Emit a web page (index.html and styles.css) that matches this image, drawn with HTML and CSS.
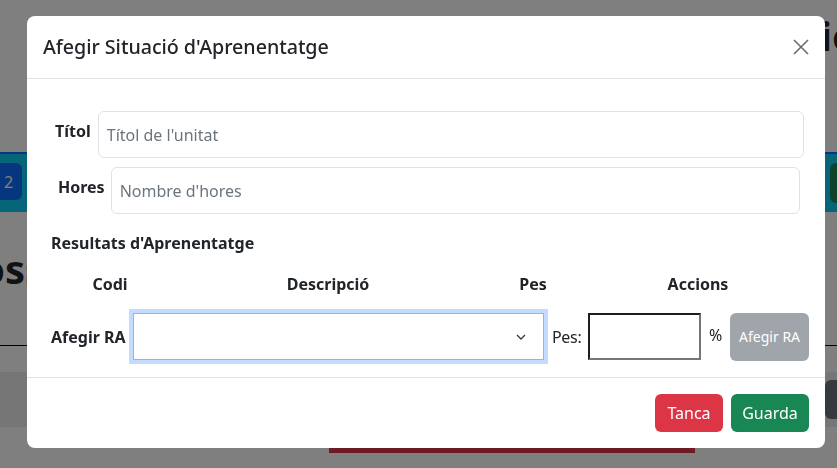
FILE: index.html
```html
<!DOCTYPE html>
<html lang="ca">
<head>
<meta charset="utf-8">
<title>Afegir Situació d'Aprenentatge</title>
<link rel="stylesheet" href="styles.css">
</head>
<body>
<div class="page">
  <header class="page-top"><h1 class="page-title">Programació</h1></header>
  <div class="toolbar">
    <span class="tb-btn tb-primary">2</span>
    <span class="tb-btn tb-success"></span>
  </div>
  <h2 class="section-title">ossos</h2>
  <hr class="rule">
  <div class="band"><span class="band-btn"></span></div>
  <div class="danger-bar"></div>
</div>
<div class="backdrop"></div>
<div class="modal" role="dialog">
  <div class="modal-header">
    <h5 class="modal-title">Afegir Situació d'Aprenentatge</h5>
    <button class="btn-close" aria-label="Close">
      <svg width="16" height="16" viewBox="0 0 16 16"><path d="M1 1L15 15M15 1L1 15" stroke="#6c6c6c" stroke-width="1.6" fill="none"/></svg>
    </button>
  </div>
  <div class="modal-body">
    <div class="form-row row-titol">
      <label class="form-label">Títol</label>
      <input class="form-input" type="text" placeholder="Títol de l'unitat">
    </div>
    <div class="form-row row-hores">
      <label class="form-label">Hores</label>
      <input class="form-input" type="text" placeholder="Nombre d'hores">
    </div>
    <h6 class="ra-title">Resultats d'Aprenentatge</h6>
    <div class="ra-head">
      <span>Codi</span><span>Descripció</span><span>Pes</span><span>Accions</span>
    </div>
    <div class="ra-add">
      <label class="ra-label">Afegir RA</label>
      <div class="ra-select">
        <svg width="10" height="6" viewBox="0 0 10 6"><polyline points="1,1 5,5 9,1" fill="none" stroke="#343a40" stroke-width="1.3"/></svg>
      </div>
      <span class="pes-label">Pes:</span>
      <input class="pes-input" type="text">
      <span class="pct">%</span>
      <button class="btn-add" disabled>Afegir RA</button>
    </div>
  </div>
  <div class="modal-footer">
    <button class="btn btn-danger">Tanca</button>
    <button class="btn btn-success">Guarda</button>
  </div>
</div>
</body>
</html>
```
FILE: styles.css
```css
html, body {
  margin: 0;
  padding: 0;
}
body {
  width: 837px;
  height: 468px;
  overflow: hidden;
  position: relative;
  background: #fff;
  font-family: "Noto Sans", "DejaVu Sans", sans-serif;
  color: #212529;
}

/* underlying page */
.page-top {
  height: 152px;
  display: flex;
  justify-content: flex-end;
  align-items: flex-start;
  overflow: hidden;
}
.page-title {
  margin: 12px -20px 0 0;
  font-size: 40px;
  line-height: 48px;
  font-weight: 700;
  white-space: nowrap;
}
.toolbar {
  height: 58px;
  border-top: 2px solid #0d6efd;
  background: #0dcaf0;
  display: flex;
  justify-content: space-between;
  align-items: center;
}
.tb-btn {
  display: flex;
  align-items: center;
  color: #fff;
  font-size: 16px;
}
.tb-primary {
  width: 18px;
  height: 37px;
  padding-left: 4px;
  background: #0d6efd;
  border-radius: 0 6px 6px 0;
  margin-top: -3px;
}
.tb-success {
  width: 30px;
  height: 40px;
  background: #198754;
  border-radius: 6px 0 0 6px;
  margin-right: -23px;
}
.section-title {
  margin: 33px 0 0 -20px;
  font-size: 40px;
  line-height: 48px;
  font-weight: 700;
  height: 100px;
  white-space: nowrap;
}
.rule {
  margin: 0;
  border: 0;
  border-top: 1px solid #000;
  height: 0;
}
.band {
  margin-top: 26px;
  height: 55px;
  background: #ececec;
  display: flex;
  justify-content: flex-end;
  align-items: center;
}
.band-btn {
  width: 40px;
  height: 39px;
  background: #6c757d;
  border-radius: 6px;
  margin-right: -28px;
}
.danger-bar {
  margin: 14px 0 0 329px;
  width: 366px;
  height: 12px;
  background: #dc3545;
}

/* overlay */
.backdrop {
  position: fixed;
  inset: 0;
  background: rgba(0, 0, 0, 0.5);
}
.modal {
  position: absolute;
  left: 27px;
  top: 16px;
  width: 798px;
  background: #fff;
  border-radius: 8px;
  overflow: hidden;
}
.modal-header {
  height: 62px;
  padding: 0 16px;
  border-bottom: 1px solid #dee2e6;
  display: flex;
  align-items: center;
  justify-content: space-between;
}
.modal-title {
  margin: 0;
  font-size: 19.7px;
  font-weight: 500;
  line-height: 24px;
  letter-spacing: -0.05px;
}
.btn-close {
  border: 0;
  background: none;
  padding: 0;
  width: 16px;
  height: 16px;
  display: flex;
}
.modal-body {
  padding: 32px 16px 17px;
}
.form-row {
  display: flex;
  align-items: center;
}
.row-titol {
  padding-left: 12px;
  margin-right: 5px;
}
.row-hores {
  margin-top: 9px;
  padding-left: 15px;
  margin-right: 9px;
}
.form-label {
  font-weight: 700;
  font-size: 16px;
  margin-right: 7px;
  padding-bottom: 7px;
}
.row-hores .form-label {
  margin-right: 6px;
}
.form-input {
  flex: 1;
  height: 47px;
  box-sizing: border-box;
  border: 1px solid #dee2e6;
  border-radius: 6px;
  padding: 0 8px;
  font-family: inherit;
  font-size: 16px;
  color: #212529;
  outline: none;
}
.form-input::placeholder {
  color: #6c757d;
}
.ra-title {
  margin: 19px 0 0 8px;
  font-size: 16px;
  line-height: 20px;
  font-weight: 700;
}
.ra-head {
  margin: 20px 0 0 8px;
  display: grid;
  grid-template-columns: 118px 318px 92px 238px;
  font-weight: 700;
  font-size: 16px;
  line-height: 22px;
  text-align: center;
}
.ra-add {
  margin: 18px 0 0 8px;
  height: 47px;
  display: flex;
  align-items: center;
  font-size: 16px;
}
.ra-label {
  width: 75px;
  font-weight: 700;
}
.ra-select {
  margin-left: 7px;
  width: 412px;
  height: 47px;
  box-sizing: border-box;
  border: 1px solid #86b7fe;
  box-shadow: 0 0 0 4px #c2dbfe;
  display: flex;
  align-items: center;
  justify-content: flex-end;
  padding-right: 17px;
}
.pes-label {
  margin-left: 8px;
  width: 30px;
  letter-spacing: -0.3px;
}
.pes-input {
  margin-left: 6px;
  width: 113px;
  height: 47px;
  box-sizing: border-box;
  border-style: solid;
  border-width: 2px;
  border-color: #1e1e1e #767676 #767676 #1e1e1e;
  padding: 0 4px;
  font-family: inherit;
  font-size: 16px;
  outline: none;
}
.pct {
  margin-left: 8px;
  padding-bottom: 4px;
}
.btn-add {
  margin-left: 8px;
  width: 79px;
  height: 48px;
  border: 0;
  border-radius: 6px;
  background: #6c757d;
  opacity: 0.65;
  color: #fff;
  font-family: inherit;
  font-size: 14px;
  padding: 0;
}
.modal-footer {
  border-top: 1px solid #dee2e6;
  padding: 16px;
  display: flex;
  justify-content: flex-end;
  gap: 8px;
}
.btn {
  height: 38px;
  border: 0;
  border-radius: 6px;
  padding: 0;
  color: #fff;
  font-family: inherit;
  font-size: 16px;
}
.btn-danger {
  width: 68px;
  background: #dc3545;
}
.btn-success {
  width: 78px;
  background: #198754;
}
```
